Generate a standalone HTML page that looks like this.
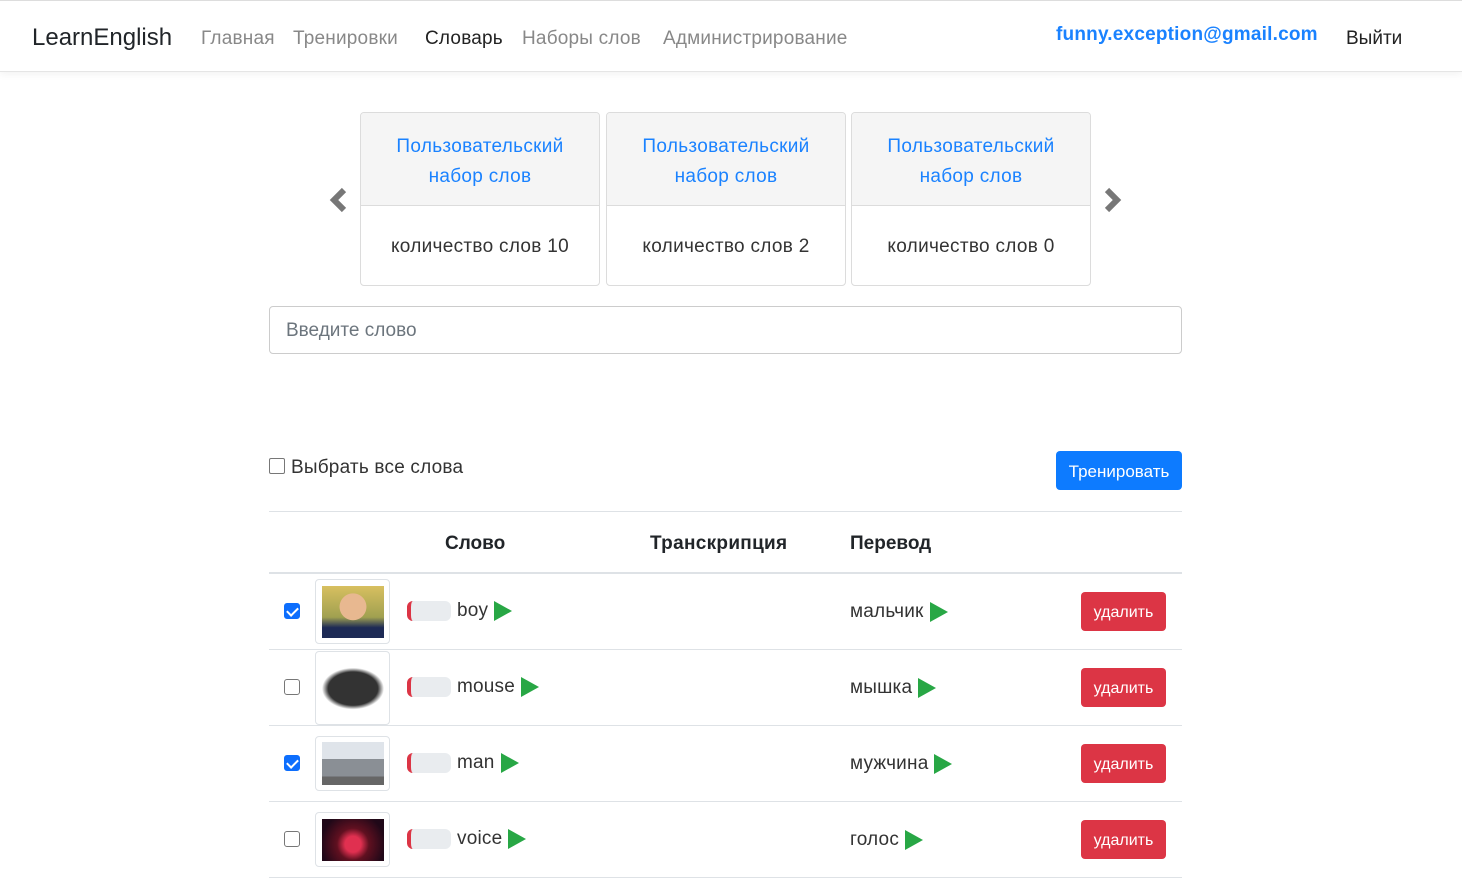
<!DOCTYPE html>
<html><head><meta charset="utf-8"><style>
*{box-sizing:border-box;margin:0;padding:0}
body{width:1462px;height:882px;overflow:hidden;background:#fff;font-family:"Segoe UI","Liberation Sans","DejaVu Sans",sans-serif;color:#212529;font-size:18px;position:relative}
.nav{position:absolute;left:0;top:0;width:1462px;height:72px;border-top:1px solid #ddd;border-bottom:1px solid #e5e5e5;box-shadow:0 2px 8px rgba(0,0,0,.06)}
.a{position:absolute;white-space:nowrap}
.brand{left:32px;top:23px;font-size:24px;color:#212529}
.nl{top:27px;font-size:19px;color:#888;letter-spacing:.2px}
.card{position:absolute;top:112px;width:240px;height:174px;border:1px solid #dcdcdc;border-radius:4px;overflow:hidden}
.card .h{height:93px;background:#f5f5f5;border-bottom:1px solid #dcdcdc;color:#1a82ff;font-size:19px;text-align:center;line-height:30px;padding-top:19px;letter-spacing:.3px}
.card .b{text-align:center;font-size:19px;line-height:82px;color:#333;letter-spacing:.3px}
.input{position:absolute;left:269px;top:306px;width:913px;height:48px;border:1px solid #ccc;border-radius:4px;padding:13px 16px;font-size:19px;color:#6c757d}
.btn{position:absolute;color:#fff;border-radius:4px;text-align:center}
.line{position:absolute;left:269px;width:913px;background:#dee2e6}
.cb{position:absolute;width:16px;height:16px;border:1px solid #777;border-radius:3px;background:#fff}
.cb.on{background:#0d6efd;border-color:#0d6efd}
.cb.on:after{content:"";position:absolute;left:4px;top:1px;width:5px;height:9px;border:solid #fff;border-width:0 2.5px 2.5px 0;transform:rotate(45deg)}
.img{position:absolute;left:315px;width:75px;height:65px;border:1px solid #dee2e6;border-radius:4px}
.img div{position:absolute;left:6px;top:6px;width:62px;height:52px}
.pill{position:absolute;left:407px;width:44px;height:20px;background:#e9ecef;border-radius:6px;border-left:4px solid #dc3545}
.tri{display:inline-block;width:0;height:0;border-left:18px solid #28a745;border-top:10px solid transparent;border-bottom:10px solid transparent;vertical-align:-5px;margin-left:6px}
.w{font-size:19px;color:#333;letter-spacing:.2px}
.del{left:1081px;width:85px;height:39px;background:#dc3545;font-size:16px;line-height:41px}
</style></head><body>
<div class="nav">
<div class="a brand">LearnEnglish</div>
<div class="a nl" style="left:201px">Главная</div>
<div class="a nl" style="left:293px">Тренировки</div>
<div class="a nl" style="left:425px;color:#222">Словарь</div>
<div class="a nl" style="left:522px">Наборы слов</div>
<div class="a nl" style="left:663px">Администрирование</div>
<div class="a" style="left:1056px;top:23px;font-size:19px;font-weight:bold;color:#1a82ff;letter-spacing:.2px">funny.exception@gmail.com</div>
<div class="a" style="left:1346px;top:27px;font-size:19px;color:#222">Выйти</div>
</div>
<svg class="a" style="left:328px;top:187px" width="20" height="26" viewBox="0 0 20 26"><path d="M16 3 L6 13 L16 23" stroke="#777" stroke-width="6" fill="none"/></svg>
<svg class="a" style="left:1103px;top:187px" width="20" height="26" viewBox="0 0 20 26"><path d="M4 3 L14 13 L4 23" stroke="#777" stroke-width="6" fill="none"/></svg>
<div class="card" style="left:360px"><div class="h">Пользовательский<br>набор слов</div><div class="b">количество слов 10</div></div>
<div class="card" style="left:606px"><div class="h">Пользовательский<br>набор слов</div><div class="b">количество слов 2</div></div>
<div class="card" style="left:851px"><div class="h">Пользовательский<br>набор слов</div><div class="b">количество слов 0</div></div>
<div class="input">Введите слово</div>
<div class="cb" style="left:269px;top:458px;border-radius:2px"></div>
<div class="a w" style="left:291px;top:457px">Выбрать все слова</div>
<div class="btn" style="left:1056px;top:451px;width:126px;height:39px;background:#0d7bff;font-size:17px;line-height:41px">Тренировать</div>
<div class="line" style="top:511px;height:1px"></div>
<div class="a" style="left:445px;top:533px;font-weight:bold;font-size:19px">Слово</div>
<div class="a" style="left:650px;top:533px;font-weight:bold;font-size:19px;letter-spacing:.3px">Транскрипция</div>
<div class="a" style="left:850px;top:533px;font-weight:bold;font-size:19px">Перевод</div>
<div class="line" style="top:572px;height:2px"></div>

<div class="cb on" style="left:284px;top:603px"></div>
<div class="img" style="top:579px"><div style="background:radial-gradient(circle at 50% 40%,#e8b890 0 30%,transparent 31%),linear-gradient(#d8c060,#a0a050 60%,#1d2a55 80%)"></div></div>
<div class="pill" style="top:601px"></div>
<div class="a w" style="left:457px;top:600px">boy<span class="tri"></span></div>
<div class="a w" style="left:850px;top:601px">мальчик<span class="tri"></span></div>
<div class="btn del" style="top:592px">удалить</div>
<div class="line" style="top:649px;height:1px"></div>

<div class="cb" style="left:284px;top:679px"></div>
<div class="img" style="top:651px;height:74px"><div style="top:8px;background:radial-gradient(ellipse 50% 40% at 50% 55%,#333 0 80%,transparent 100%)"></div></div>
<div class="pill" style="top:677px"></div>
<div class="a w" style="left:457px;top:676px">mouse<span class="tri"></span></div>
<div class="a w" style="left:850px;top:677px">мышка<span class="tri"></span></div>
<div class="btn del" style="top:668px">удалить</div>
<div class="line" style="top:725px;height:1px"></div>

<div class="cb on" style="left:284px;top:755px"></div>
<div class="img" style="top:736px;height:55px"><div style="top:5px;height:43px;background:linear-gradient(#dfe4ea 0 40%,#8a8f95 40% 80%,#666 80%)"></div></div>
<div class="pill" style="top:753px"></div>
<div class="a w" style="left:457px;top:752px">man<span class="tri"></span></div>
<div class="a w" style="left:850px;top:753px">мужчина<span class="tri"></span></div>
<div class="btn del" style="top:744px">удалить</div>
<div class="line" style="top:801px;height:1px"></div>

<div class="cb" style="left:284px;top:831px"></div>
<div class="img" style="top:812px;height:55px"><div style="top:6px;height:42px;background:radial-gradient(circle at 50% 60%,#e03050 0 20%,#601020 40%,#200818 80%)"></div></div>
<div class="pill" style="top:829px"></div>
<div class="a w" style="left:457px;top:828px">voice<span class="tri"></span></div>
<div class="a w" style="left:850px;top:829px">голос<span class="tri"></span></div>
<div class="btn del" style="top:820px">удалить</div>
<div class="line" style="top:877px;height:1px"></div>
</body></html>
